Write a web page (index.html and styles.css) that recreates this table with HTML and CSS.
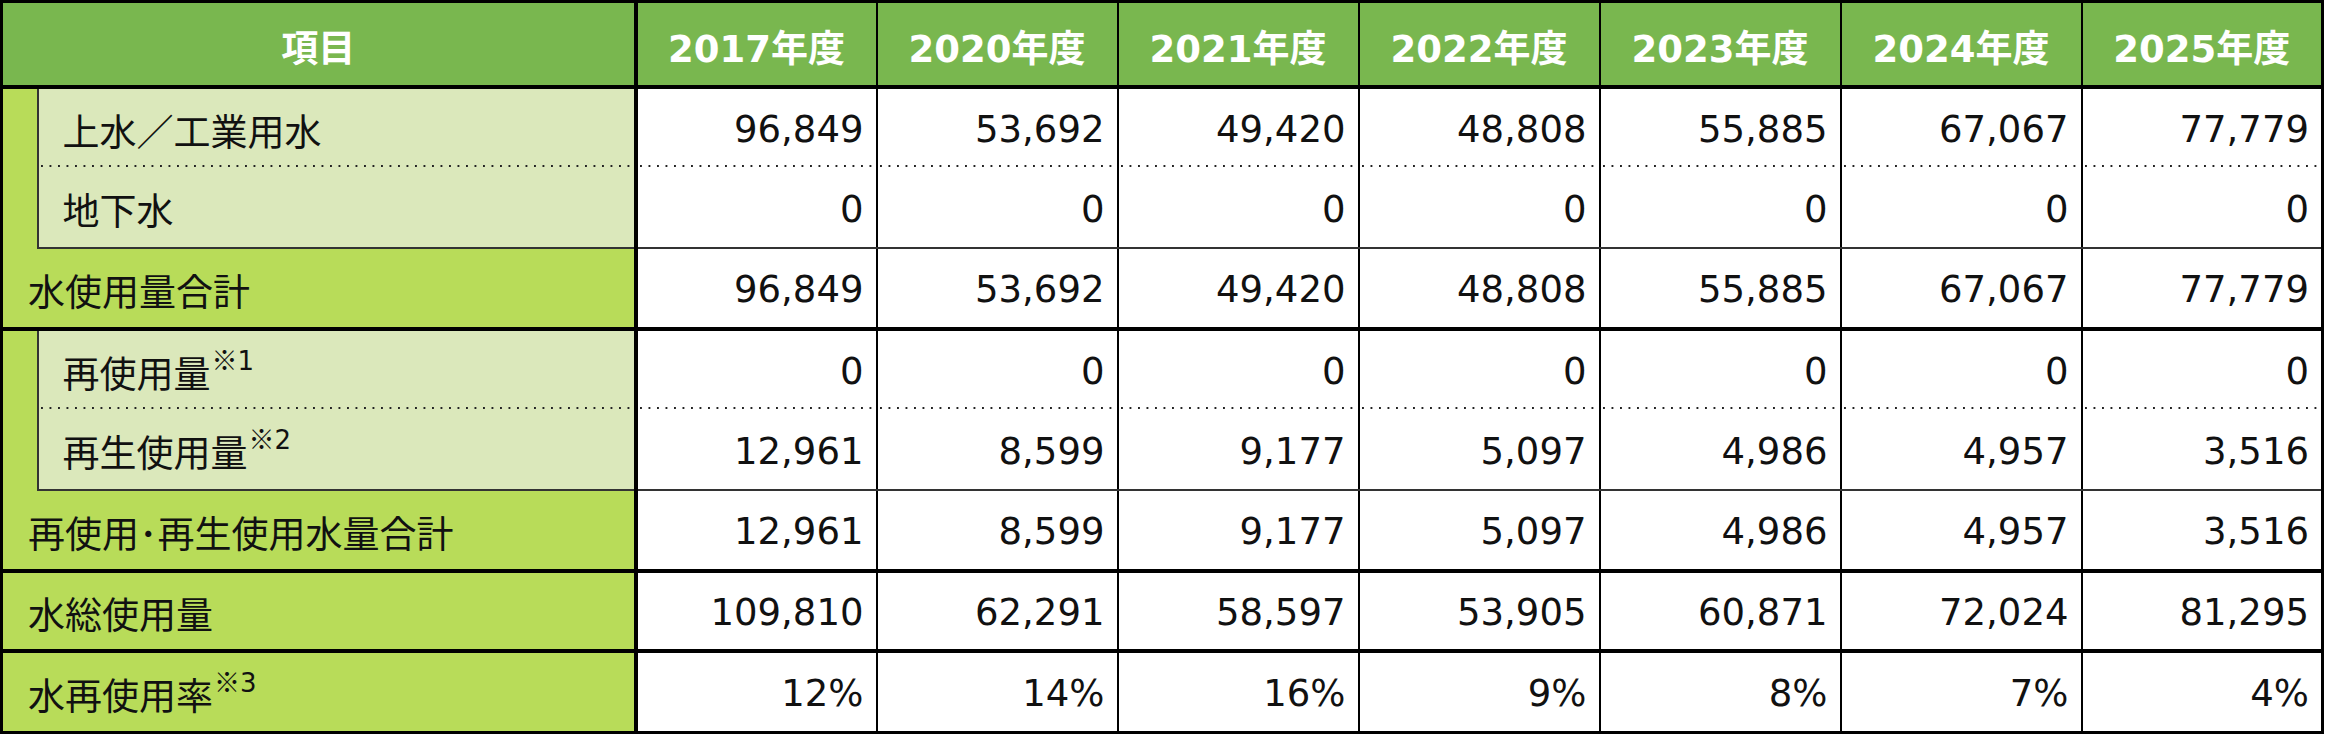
FILE: index.html
```html
<!DOCTYPE html>
<html lang="ja">
<head>
<meta charset="utf-8">
<title>水使用量</title>
<link rel="stylesheet" href="styles.css">
</head>
<body>
<table class="tbl">
  <colgroup>
    <col class="c-stripe">
    <col class="c-label">
    <col class="c-val"><col class="c-val"><col class="c-val"><col class="c-val"><col class="c-val"><col class="c-val"><col class="c-val">
  </colgroup>
  <thead>
    <tr class="head">
      <th class="h-item" colspan="2">項目</th>
      <th>2017年度</th><th>2020年度</th><th>2021年度</th><th>2022年度</th><th>2023年度</th><th>2024年度</th><th>2025年度</th>
    </tr>
  </thead>
  <tbody>
    <tr class="row">
      <td class="stripe" rowspan="2"></td>
      <td class="sub dot">上水／工業用水</td>
      <td class="val dot">96,849</td><td class="val dot">53,692</td><td class="val dot">49,420</td><td class="val dot">48,808</td><td class="val dot">55,885</td><td class="val dot">67,067</td><td class="val dot">77,779</td>
    </tr>
    <tr class="row">
      <td class="sub last">地下水</td>
      <td class="val last">0</td><td class="val last">0</td><td class="val last">0</td><td class="val last">0</td><td class="val last">0</td><td class="val last">0</td><td class="val last">0</td>
    </tr>
    <tr class="row thick">
      <td class="total" colspan="2">水使用量合計</td>
      <td class="val">96,849</td><td class="val">53,692</td><td class="val">49,420</td><td class="val">48,808</td><td class="val">55,885</td><td class="val">67,067</td><td class="val">77,779</td>
    </tr>
    <tr class="row">
      <td class="stripe" rowspan="2"></td>
      <td class="sub dot">再使用量<sup class="note"><span class="mark">※</span>1</sup></td>
      <td class="val dot">0</td><td class="val dot">0</td><td class="val dot">0</td><td class="val dot">0</td><td class="val dot">0</td><td class="val dot">0</td><td class="val dot">0</td>
    </tr>
    <tr class="row">
      <td class="sub last">再生使用量<sup class="note"><span class="mark">※</span>2</sup></td>
      <td class="val last">12,961</td><td class="val last">8,599</td><td class="val last">9,177</td><td class="val last">5,097</td><td class="val last">4,986</td><td class="val last">4,957</td><td class="val last">3,516</td>
    </tr>
    <tr class="row thick">
      <td class="total" colspan="2">再使用<span class="mid">･</span>再生使用水量合計</td>
      <td class="val">12,961</td><td class="val">8,599</td><td class="val">9,177</td><td class="val">5,097</td><td class="val">4,986</td><td class="val">4,957</td><td class="val">3,516</td>
    </tr>
    <tr class="row thick">
      <td class="total" colspan="2">水総使用量</td>
      <td class="val">109,810</td><td class="val">62,291</td><td class="val">58,597</td><td class="val">53,905</td><td class="val">60,871</td><td class="val">72,024</td><td class="val">81,295</td>
    </tr>
    <tr class="row">
      <td class="total" colspan="2">水再使用率<sup class="note"><span class="mark">※</span>3</sup></td>
      <td class="val">12%</td><td class="val">14%</td><td class="val">16%</td><td class="val">9%</td><td class="val">8%</td><td class="val">7%</td><td class="val">4%</td>
    </tr>
  </tbody>
</table>
</body>
</html>
```

FILE: styles.css
```css
html, body {
  margin: 0;
  padding: 0;
  background: #ffffff;
}

.tbl {
  border-collapse: collapse;
  table-layout: fixed;
  width: 2320px;
  border: 3px solid #000;
  font-family: "DejaVu Sans", "Noto Sans CJK JP", sans-serif;
  font-size: 37px;
  color: #111;
}

.c-stripe { width: 36px; }
.c-label { width: 598px; }
.c-val { width: 241px; }

.head {
  height: 85px;
}

.head th {
  background: #79b74f;
  color: #ffffff;
  font-weight: bold;
  text-align: center;
  vertical-align: middle;
  padding: 4px 0 0 0;
  border-left: 2px solid #000;
  border-bottom: 4px solid #000;
  white-space: nowrap;
}

.head th.h-item {
  border-left: 3px solid #000;
  border-right: 4px solid #000;
}

.row {
  height: 80.7px;
}

.row td {
  padding: 4px 0 0 0;
  vertical-align: middle;
  white-space: nowrap;
}

.stripe {
  background: #b8dc59;
  border-left: 3px solid #000;
}

.sub {
  background: #dbe8bb;
  border-left: 2px solid #333;
  border-right: 4px solid #000;
  padding-left: 24px !important;
}

.total {
  background: #b8dc59;
  border-left: 3px solid #000;
  border-right: 4px solid #000;
  padding-left: 25px !important;
}

.val {
  background-color: #ffffff;
  text-align: right;
  padding-right: 12px !important;
  border-left: 2px solid #000;
}

.dot {
  background-image: linear-gradient(to right, #222 2px, transparent 2px);
  background-size: 8.5px 2px;
  background-repeat: repeat-x;
  background-position: 2px bottom;
}

.last {
  border-bottom: 2px solid #333;
}

.thick td {
  border-bottom: 4px solid #000;
}

.note {
  font-size: 26px;
  line-height: 0;
  vertical-align: 0.7em;
  margin-left: 1px;
}

.mark {
  font-family: "Noto Sans CJK JP", sans-serif;
}

.mid {
  font-family: "Noto Sans CJK JP", sans-serif;
}
```
